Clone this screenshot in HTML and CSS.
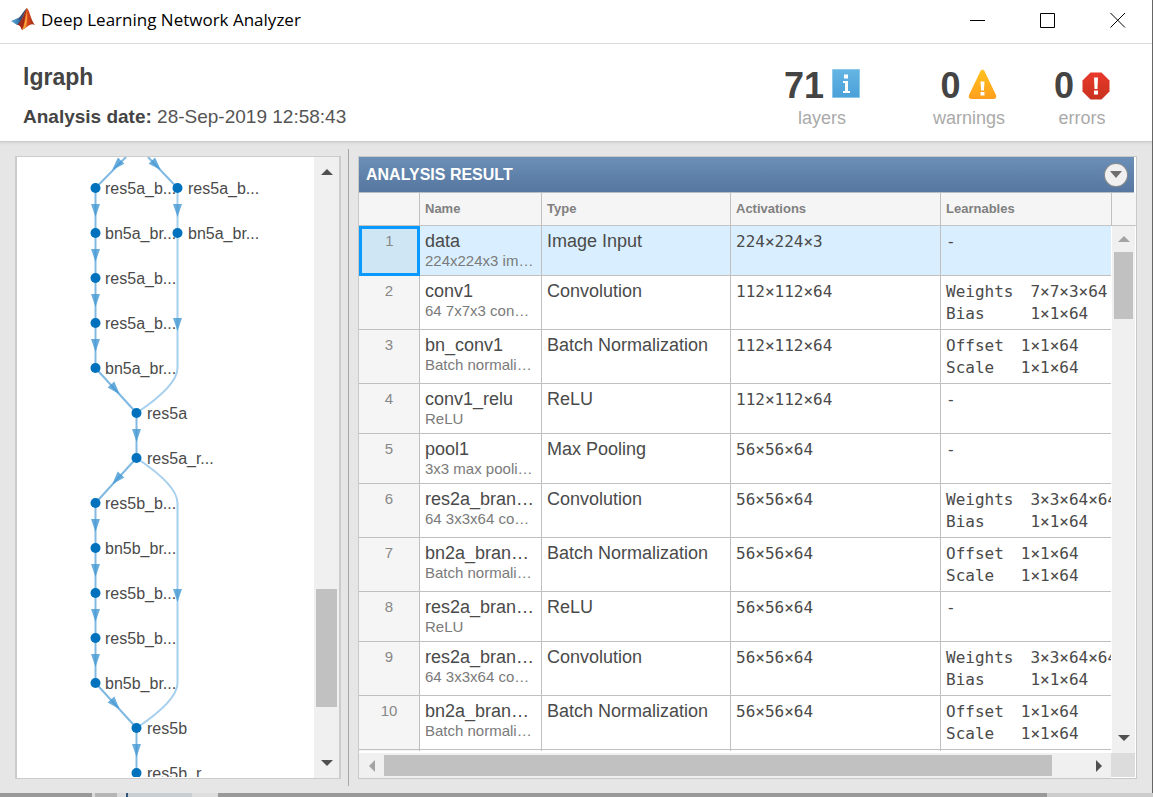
FILE: index.html
```html
<!DOCTYPE html>
<html lang="en">
<head>
<meta charset="utf-8">
<title>Deep Learning Network Analyzer</title>
<link rel="stylesheet" href="styles.css">
</head>
<body>
<div class="window">
  <header class="titlebar">
    <svg class="logo" width="24" height="23" viewBox="0 0 24 23" aria-hidden="true">
      <defs>
        <linearGradient id="peak" x1="0" x2="1"><stop offset="0" stop-color="#7a1f14"/><stop offset=".45" stop-color="#e8702a"/><stop offset=".6" stop-color="#d9481c"/><stop offset="1" stop-color="#8f2412"/></linearGradient>
        <linearGradient id="wing" x1="0" x2="1"><stop offset="0" stop-color="#5fb0dc"/><stop offset="1" stop-color="#2b5f93"/></linearGradient>
      </defs>
      <path d="M0 13 7 10 11 14 6 17Z" fill="url(#wing)"/>
      <path d="M7 10C10 9 12 3 16 0L13 11 9 16 6 17 9 13Z" fill="#3b4f7a"/>
      <path d="M16 0C19 3 20 13 24 17 19 14 16 20 11 22 10 19 8 16 6 17 11 15 13 4 16 0Z" fill="url(#peak)"/>
      <path d="M16 0C14 7 14 15 11 22 10 19 9 17 7 17 11 14 13 6 16 0Z" fill="#a62a18"/>
      <path d="M11 22C14 18 14 11 16 4 16 12 16 16 14 20Z" fill="#f9a63c"/>
    </svg>
    <h1 class="title">Deep Learning Network Analyzer</h1>
    <div class="controls">
      <button class="control" aria-label="Minimize"><svg width="16" height="16" viewBox="0 0 16 16"><path d="M0 8.500H15"/></svg></button>
      <button class="control" aria-label="Maximize"><svg width="16" height="16" viewBox="0 0 16 16"><path d="M.5 1.500H14.500V15.500H.5Z"/></svg></button>
      <button class="control" aria-label="Close"><svg width="16" height="16" viewBox="0 0 16 16"><path d="M.5 1 15 15.500M15 1 .5 15.500"/></svg></button>
    </div>
  </header>

  <section class="summary">
    <div class="network">
      <h2 class="network-name">lgraph</h2>
      <p class="date"><strong>Analysis date:</strong> 28-Sep-2019 12:58:43</p>
    </div>
    <div class="stats">
      <div class="stat stat-layers">
        <div class="count">71
          <svg width="28" height="29" viewBox="0 0 28 29" aria-hidden="true"><defs><linearGradient id="blue" x1="0" x2="0" y1="0" y2="1"><stop offset="0" stop-color="#65b5e3"/><stop offset="1" stop-color="#4aa0d8"/></linearGradient></defs><path d="M.5.5h27v28H.5z" fill="url(#blue)" stroke="#8cc8ea"/><path d="M12 5.500h4v4h-4zM11 12h5v10h2v2h-7v-2h2v-8h-2z" fill="#fff"/></svg>
        </div>
        <div class="label">layers</div>
      </div>
      <div class="stat">
        <div class="count">0
          <svg width="29" height="30" viewBox="0 0 29 30" aria-hidden="true"><defs><linearGradient id="amber" x1="0" x2="0" y1="0" y2="1"><stop offset="0" stop-color="#ffc21c"/><stop offset="1" stop-color="#ff9f1e"/></linearGradient></defs><path d="M12.500 2Q14.500-1 16.500 2L28 26Q29 30 25.500 30H3.500Q0 30 1 26Z" fill="url(#amber)"/><path d="M12.500 12.500h4l-.6 9h-2.800zM12.500 23h4v3.500h-4z" fill="#fff"/></svg>
        </div>
        <div class="label">warnings</div>
      </div>
      <div class="stat">
        <div class="count">0
          <svg class="low" width="28" height="28" viewBox="0 0 28 28" aria-hidden="true"><defs><linearGradient id="red" x1="0" x2="0" y1="0" y2="1"><stop offset="0" stop-color="#e8392b"/><stop offset="1" stop-color="#c8321f"/></linearGradient></defs><path d="M8.500.5h11l8 8v11l-8 8h-11l-8-8v-11z" fill="url(#red)"/><path d="M12 5.500h4l-.5 11.500h-3zM12 18.500h4V22.500h-4z" fill="#fff"/></svg>
        </div>
        <div class="label">errors</div>
      </div>
    </div>
  </section>

  <main class="workspace">
    <section class="panel graph-panel" aria-label="Network graph">
      <div class="graph">
        <svg width="298" height="620" viewBox="0 0 298 620">
          <defs>
            <path id="arrow" d="M-4.500-6H4.500L0 7Z"/>
          </defs>
          <g class="edges">
            <path d="M78.500 31 109 0M160.500 31 131 0M78.500 31V211L119.500 256V301L78.500 346V526L119.500 571V616"/>
            <path class="skip" d="M160.500 31V211C160.500 226 139 243 119.500 256M119.500 301C139 314 160.500 331 160.500 346V526C160.500 541 139 558 119.500 571"/>
          </g>
          <g class="arrows">
            <use href="#arrow" transform="translate(100 8) rotate(44)"/><use href="#arrow" transform="translate(139 8) rotate(-44)"/>
            <use href="#arrow" x="78.500" y="53"/><use href="#arrow" x="160.500" y="53"/>
            <use href="#arrow" x="78.500" y="98"/><use href="#arrow" x="78.500" y="143"/><use href="#arrow" x="78.500" y="188"/>
            <use href="#arrow" x="160.500" y="167"/>
            <use href="#arrow" transform="translate(98 232) rotate(-42)"/>
            <use href="#arrow" x="119.500" y="278"/>
            <use href="#arrow" transform="translate(100 322) rotate(42)"/>
            <use href="#arrow" x="78.500" y="368"/><use href="#arrow" x="78.500" y="413"/><use href="#arrow" x="78.500" y="458"/><use href="#arrow" x="78.500" y="503"/>
            <use href="#arrow" x="160.500" y="438"/>
            <use href="#arrow" transform="translate(98 547) rotate(-42)"/>
            <use href="#arrow" x="119.500" y="593"/>
          </g>
          <g class="nodes">
            <circle cx="78.500" cy="31" r="5"/><circle cx="160.500" cy="31" r="5"/>
            <circle cx="78.500" cy="76" r="5"/><circle cx="160.500" cy="76" r="5"/>
            <circle cx="78.500" cy="121" r="5"/><circle cx="78.500" cy="166" r="5"/><circle cx="78.500" cy="211" r="5"/>
            <circle cx="119.500" cy="256" r="5"/><circle cx="119.500" cy="301" r="5"/>
            <circle cx="78.500" cy="346" r="5"/><circle cx="78.500" cy="391" r="5"/><circle cx="78.500" cy="436" r="5"/><circle cx="78.500" cy="481" r="5"/><circle cx="78.500" cy="526" r="5"/>
            <circle cx="119.500" cy="571" r="5"/><circle cx="119.500" cy="616" r="5"/>
          </g>
          <g class="names">
            <text x="88" y="37">res5a_b...</text><text x="171" y="37">res5a_b...</text>
            <text x="88" y="82">bn5a_br...</text><text x="171" y="82">bn5a_br...</text>
            <text x="88" y="127">res5a_b...</text><text x="88" y="172">res5a_b...</text><text x="88" y="217">bn5a_br...</text>
            <text x="130" y="262">res5a</text><text x="130" y="307">res5a_r...</text>
            <text x="88" y="352">res5b_b...</text><text x="88" y="397">bn5b_br...</text><text x="88" y="442">res5b_b...</text><text x="88" y="487">res5b_b...</text><text x="88" y="532">bn5b_br...</text>
            <text x="130" y="577">res5b</text><text x="130" y="622">res5b_r...</text>
          </g>
        </svg>
      </div>
      <div class="scroll scroll-y graph-scroll">
        <button class="step" aria-label="Scroll graph up"><svg width="12" height="6" viewBox="0 0 12 6"><path d="M0 6 6 0 12 6Z"/></svg></button>
        <div class="before"></div><div class="thumb"></div><div class="after"></div>
        <button class="step" aria-label="Scroll graph down"><svg width="12" height="6" viewBox="0 0 12 6"><path d="M0 0H12L6 6Z"/></svg></button>
      </div>
    </section>

    <div class="divider"></div>

    <section class="panel result-panel">
      <div class="result-title">
        <h2 class="result-heading">ANALYSIS RESULT</h2>
        <button class="menu" aria-label="Table options"><svg width="12" height="7" viewBox="0 0 12 7"><path d="M0 0H12L6 7Z"/></svg></button>
      </div>
      <div class="table-view">
        <table class="layers">
          <colgroup><col class="c-num"><col class="c-name"><col class="c-type"><col class="c-act"><col></colgroup>
          <thead><tr><th></th><th>Name</th><th>Type</th><th>Activations</th><th>Learnables</th></tr></thead>
          <tbody>
            <tr class="selected"><td class="num">1</td><td>data<div class="sub">224x224x3 im…</div></td><td>Image Input</td><td class="mono">224×224×3</td><td class="mono">-</td></tr>
            <tr><td class="num">2</td><td>conv1<div class="sub">64 7x7x3 con…</div></td><td>Convolution</td><td class="mono">112×112×64</td><td class="mono"><dl><dt>Weights</dt><dd>7×7×3×64</dd><dt>Bias</dt><dd>1×1×64</dd></dl></td></tr>
            <tr><td class="num">3</td><td>bn_conv1<div class="sub">Batch normali…</div></td><td>Batch Normalization</td><td class="mono">112×112×64</td><td class="mono"><dl><dt>Offset</dt><dd>1×1×64</dd><dt>Scale</dt><dd>1×1×64</dd></dl></td></tr>
            <tr><td class="num">4</td><td>conv1_relu<div class="sub">ReLU</div></td><td>ReLU</td><td class="mono">112×112×64</td><td class="mono">-</td></tr>
            <tr><td class="num">5</td><td>pool1<div class="sub">3x3 max pooli…</div></td><td>Max Pooling</td><td class="mono">56×56×64</td><td class="mono">-</td></tr>
            <tr><td class="num">6</td><td>res2a_bran…<div class="sub">64 3x3x64 co…</div></td><td>Convolution</td><td class="mono">56×56×64</td><td class="mono"><dl><dt>Weights</dt><dd>3×3×64×64</dd><dt>Bias</dt><dd>1×1×64</dd></dl></td></tr>
            <tr><td class="num">7</td><td>bn2a_bran…<div class="sub">Batch normali…</div></td><td>Batch Normalization</td><td class="mono">56×56×64</td><td class="mono"><dl><dt>Offset</dt><dd>1×1×64</dd><dt>Scale</dt><dd>1×1×64</dd></dl></td></tr>
            <tr><td class="num">8</td><td>res2a_bran…<div class="sub">ReLU</div></td><td>ReLU</td><td class="mono">56×56×64</td><td class="mono">-</td></tr>
            <tr><td class="num">9</td><td>res2a_bran…<div class="sub">64 3x3x64 co…</div></td><td>Convolution</td><td class="mono">56×56×64</td><td class="mono"><dl><dt>Weights</dt><dd>3×3×64×64</dd><dt>Bias</dt><dd>1×1×64</dd></dl></td></tr>
            <tr><td class="num">10</td><td>bn2a_bran…<div class="sub">Batch normali…</div></td><td>Batch Normalization</td><td class="mono">56×56×64</td><td class="mono"><dl><dt>Offset</dt><dd>1×1×64</dd><dt>Scale</dt><dd>1×1×64</dd></dl></td></tr>
            <tr><td class="num"></td><td></td><td></td><td></td><td></td></tr>
          </tbody>
        </table>
      </div>
      <div class="side">
        <div class="side-head"></div>
        <div class="scroll scroll-y table-scroll">
          <button class="step dim" aria-label="Scroll table up"><svg width="12" height="6" viewBox="0 0 12 6"><path d="M0 6 6 0 12 6Z"/></svg></button>
          <div class="thumb"></div><div class="after"></div>
          <button class="step" aria-label="Scroll table down"><svg width="12" height="6" viewBox="0 0 12 6"><path d="M0 0H12L6 6Z"/></svg></button>
        </div>
      </div>
      <div class="scroll scroll-x">
        <button class="step dim" aria-label="Scroll table left"><svg width="6" height="12" viewBox="0 0 6 12"><path d="M6 0V12L0 6Z"/></svg></button>
        <div class="thumb"></div><div class="after"></div>
        <button class="step" aria-label="Scroll table right"><svg width="6" height="12" viewBox="0 0 6 12"><path d="M0 0 6 6 0 12Z"/></svg></button>
      </div>
      <div class="corner"></div>
    </section>
  </main>
</div>
<div class="backdrop"></div>
</body>
</html>
```
FILE: styles.css
```css
* { box-sizing: border-box; }
body {
  margin: 0;
  height: 100vh;
  display: flex;
  flex-direction: column;
  overflow: hidden;
  font-family: Arial, "Liberation Sans", sans-serif;
  color: #444;
}
h1, h2, p, dl, dd { margin: 0; font-weight: normal; }
button { border: 0; padding: 0; background: none; display: flex; align-items: center; justify-content: center; }
svg { display: block; flex: none; }

.window {
  flex: 1;
  min-height: 0;
  display: flex;
  flex-direction: column;
  border-right: 1px solid #666;
  background: #fff;
}
.titlebar {
  flex: none;
  height: 44px;
  display: flex;
  align-items: center;
  padding: 0 26px 4px 11px;
  border-bottom: 1px solid #d9dcd9;
}
.title { margin-left: 6px; font: 17px/24px "Segoe UI", "Open Sans", sans-serif; color: #000; }
.controls { margin-left: auto; display: flex; gap: 54px; }
.control { width: 16px; height: 16px; }
.control svg { fill: none; stroke: #000; }

.summary {
  flex: none;
  height: 98px;
  display: flex;
  justify-content: space-between;
  padding: 18px 42px 0 23px;
  border-bottom: 1px solid #ccc;
}
.network-name { font-size: 23px; line-height: 30px; font-weight: bold; }
.date { margin-top: 12px; font-size: 19px; line-height: 26px; color: #555; }
.date strong { color: #444; }
.stats { display: flex; gap: 49px; }
.stat-layers { margin-right: 24px; }
.count { height: 45px; padding-top: 2px; display: flex; align-items: center; justify-content: center; gap: 8px; font-size: 36px; font-weight: bold; }
.count svg { margin-bottom: 4px; }
.count svg.low { margin-bottom: 0; }
.label { font-size: 18px; line-height: 22px; text-align: center; color: #aaa; }

.workspace {
  flex: 1;
  min-height: 0;
  display: flex;
  padding: 7px 15px 7px 15px;
  background: #e6e6e6;
  box-shadow: inset 0 3px 3px -2px #d2d2d2;
}
.panel { margin: 7px 0; border: 1px solid #c8c8c8; min-height: 0; overflow: hidden; background: #fff; }
.graph-panel { flex: none; width: 326px; border-width: 1px 2px; border-color: #ccc; display: flex; }
.divider { flex: none; width: 1px; margin: 0 9px 0 7px; background: #a6a6a6; }
.graph { flex: 1; min-width: 0; overflow: hidden; }
.edges path { fill: none; stroke: #80b9e2; stroke-width: 2; }
.edges .skip { stroke: #a6d0ed; }
.arrows { fill: #4499d3; fill-opacity: .8; }
.nodes { fill: #0072bd; }
.names { font-size: 16px; fill: #4a4a4a; }

.scroll { display: flex; background: #f0f0f0; }
.scroll-y { flex-direction: column; padding: 0 2px; }
.thumb { background: #c1c1c1; }
.step { flex: none; fill: #505050; }
.step.dim { fill: #a3a3a3; }
.scroll-y .step { height: 30px; }
.graph-scroll { width: 25px; }
.graph-scroll .before { flex: 402; }
.graph-scroll .thumb { flex: 118; }
.graph-scroll .after { flex: 41; }

.result-panel {
  flex: 1;
  min-width: 0;
  display: grid;
  grid-template-columns: minmax(0, 1fr) 25px;
  grid-template-rows: 36px minmax(0, 1fr) 25px;
}
.result-title {
  grid-column: 1 / 3;
  margin-right: 2px;
  display: flex;
  align-items: center;
  justify-content: space-between;
  padding: 0 7px;
  background: linear-gradient(#6b8fb7, #56779f);
  border-bottom: 1px solid #b5bcc5;
}
.result-heading { font-size: 16px; font-weight: bold; color: #fff; }
.menu { width: 22px; height: 22px; border-radius: 50%; background: #f0f0f0; box-shadow: 0 0 1px 1px #8c8c8c; fill: #6e6e6e; }
.table-view { overflow: hidden; margin-bottom: 2px; }
.layers { width: 100%; table-layout: fixed; border-collapse: separate; border-spacing: 0; }
.c-num { width: 61px; }
.c-name { width: 122px; }
.c-type { width: 189px; }
.c-act { width: 210px; }
th {
  height: 33px;
  padding: 0 5px;
  text-align: left;
  font-size: 13px;
  line-height: 16px;
  color: #808080;
  background: #f5f5f5;
  border-right: 1px solid #c0c0c0;
  border-bottom: 1px solid #c4c4c4;
}
td {
  height: 50px;
  padding: 5px 0 4px 5px;
  vertical-align: top;
  overflow: hidden;
  white-space: nowrap;
  font-size: 18px;
  line-height: 20px;
  color: #4a4a4a;
  border-right: 1px solid #c0c0c0;
  border-bottom: 1px solid #c0c0c0;
}
th:last-child, td:last-child { border-right: 0; }
td.num { padding-left: 0; text-align: center; font-size: 15px; color: #888; background: #f5f5f5; }
.sub { font-size: 15px; line-height: 20px; color: #7a7a7a; }
td.mono { padding: 5px 0 4px 5px; font: 16px/22px Consolas, "DejaVu Sans Mono", monospace; }
dl { display: grid; grid-template-columns: max-content max-content; column-gap: 17px; }
.selected td { background: #d9efff; }
.selected td.num { padding: 2px 0 0; background: #cfe6f5; border: 3px solid #0a99ff; }

.side { display: flex; flex-direction: column; min-height: 0; }
.side-head { flex: none; height: 33px; background: #f5f5f5; border-left: 1px solid #c0c0c0; border-bottom: 1px solid #c4c4c4; }
.table-scroll { flex: 1; margin: 0 1px; }
.table-scroll .step:first-child { height: 26px; }
.table-scroll .thumb { flex: 67; }
.table-scroll .after { flex: 404; }
.scroll-x { padding: 2px 0; }
.scroll-x .step { width: 25px; }
.scroll-x .thumb { flex: 668; }
.scroll-x .after { flex: 34; }
.corner { margin: 0 1px 1px 0; background: #dcdcdc; }

.backdrop {
  flex: none;
  height: 4px;
  background: linear-gradient(90deg, #999 92px, #ddd 92px 95px, #b5b5b5 95px 117px, #ddd 117px 126px, #2f5580 126px 128px, #c9ced2 128px 192px, #ddd 192px 218px, #999 218px calc(100% - 106px), #ccc calc(100% - 106px));
}
```
